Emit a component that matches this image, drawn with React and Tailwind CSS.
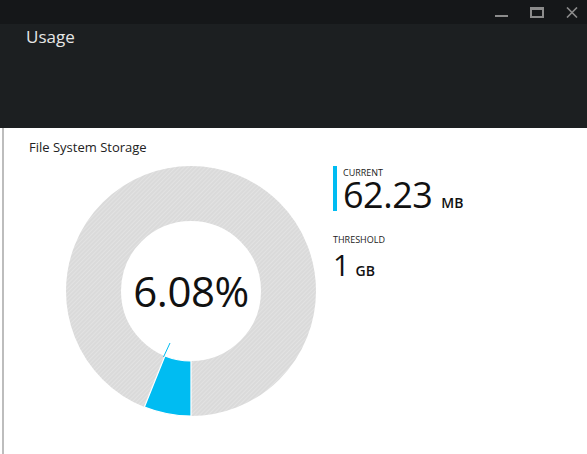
import React from "react";

const font = { fontFamily: '"Open Sans", "Noto Sans", sans-serif' };

function Donut() {
  return (
    <svg width="250" height="250" viewBox="0 0 250 250" className="block">
      <defs>
        <pattern
          id="hatch"
          patternUnits="userSpaceOnUse"
          width="3"
          height="3"
          patternTransform="rotate(45)"
        >
          <rect width="3" height="3" fill="#dadada" />
          <rect width="1" height="3" fill="#e2e2e2" />
        </pattern>
      </defs>
      <circle cx="125" cy="125" r="97.5" fill="none" stroke="url(#hatch)" strokeWidth="55" />
      <path
        d="M125 250 A125 125 0 0 1 78.4 241 L98.9 190 A70 70 0 0 0 125 195 Z"
        fill="#00bcf2"
        stroke="#ffffff"
        strokeWidth="1.2"
      />
      <line x1="104" y1="177" x2="97.5" y2="191" stroke="#00bcf2" strokeWidth="1" />
    </svg>
  );
}

export default function App() {
  return (
    <div className="w-[587px] h-[454px] flex flex-col overflow-hidden" style={font}>
      <div className="h-[24px] bg-[#151719] flex justify-end items-start">
        <div className="flex items-center gap-[22px] pt-[7px] pr-[9px]">
          <div className="w-[13px] h-[11px] flex items-end pb-[1px]">
            <div className="w-[13px] h-[2px] bg-[#8c8c8c]" />
          </div>
          <div className="w-[14px] h-[11px] border-2 border-t-[3px] border-[#8c8c8c]" />
          <svg width="12" height="11" viewBox="0 0 12 11">
            <path d="M1 0.5 L11 10.5 M11 0.5 L1 10.5" stroke="#8c8c8c" strokeWidth="1.6" />
          </svg>
        </div>
      </div>
      <div className="h-[104px] bg-[#1c1f21] pl-[26px] pt-[1px]">
        <div className="text-[17px] text-[#e6e6e6] leading-[24px]">Usage</div>
      </div>
      <div className="flex-1 bg-white ml-[2px] border-l-2 border-[#bdbdbd] pl-[25px] pt-[10px]">
        <div className="text-[13px] leading-[18px] text-[#222]">File System Storage</div>
        <div className="flex mt-[10px]">
          <div className="relative ml-[37px] w-[250px] h-[250px]">
            <Donut />
            <div className="absolute inset-0 flex items-center justify-center">
              <span className="text-[42px] text-[#111] leading-none tracking-[-0.5px]">6.08%</span>
            </div>
          </div>
          <div className="ml-[17px] flex flex-col">
            <div className="border-l-4 border-[#00bcf2] pl-[6px] pt-[2px] h-[45px] flex flex-col">
              <div className="text-[9px] leading-[10px] text-[#222] uppercase">Current</div>
              <div className="flex items-baseline">
                <span className="text-[36px] leading-[33px] text-[#111] tracking-[-0.5px]">62.23</span>
                <span className="text-[14px] leading-[16px] font-semibold text-[#111] ml-[9px]">MB</span>
              </div>
            </div>
            <div className="mt-[23px]">
              <div className="text-[9px] leading-[11px] text-[#222] uppercase">Threshold</div>
              <div className="flex items-baseline mt-[5px]">
                <span className="text-[29px] leading-[29px] text-[#111]">1</span>
                <span className="text-[14px] leading-[16px] font-semibold text-[#111] ml-[6px]">GB</span>
              </div>
            </div>
          </div>
        </div>
      </div>
    </div>
  );
}
